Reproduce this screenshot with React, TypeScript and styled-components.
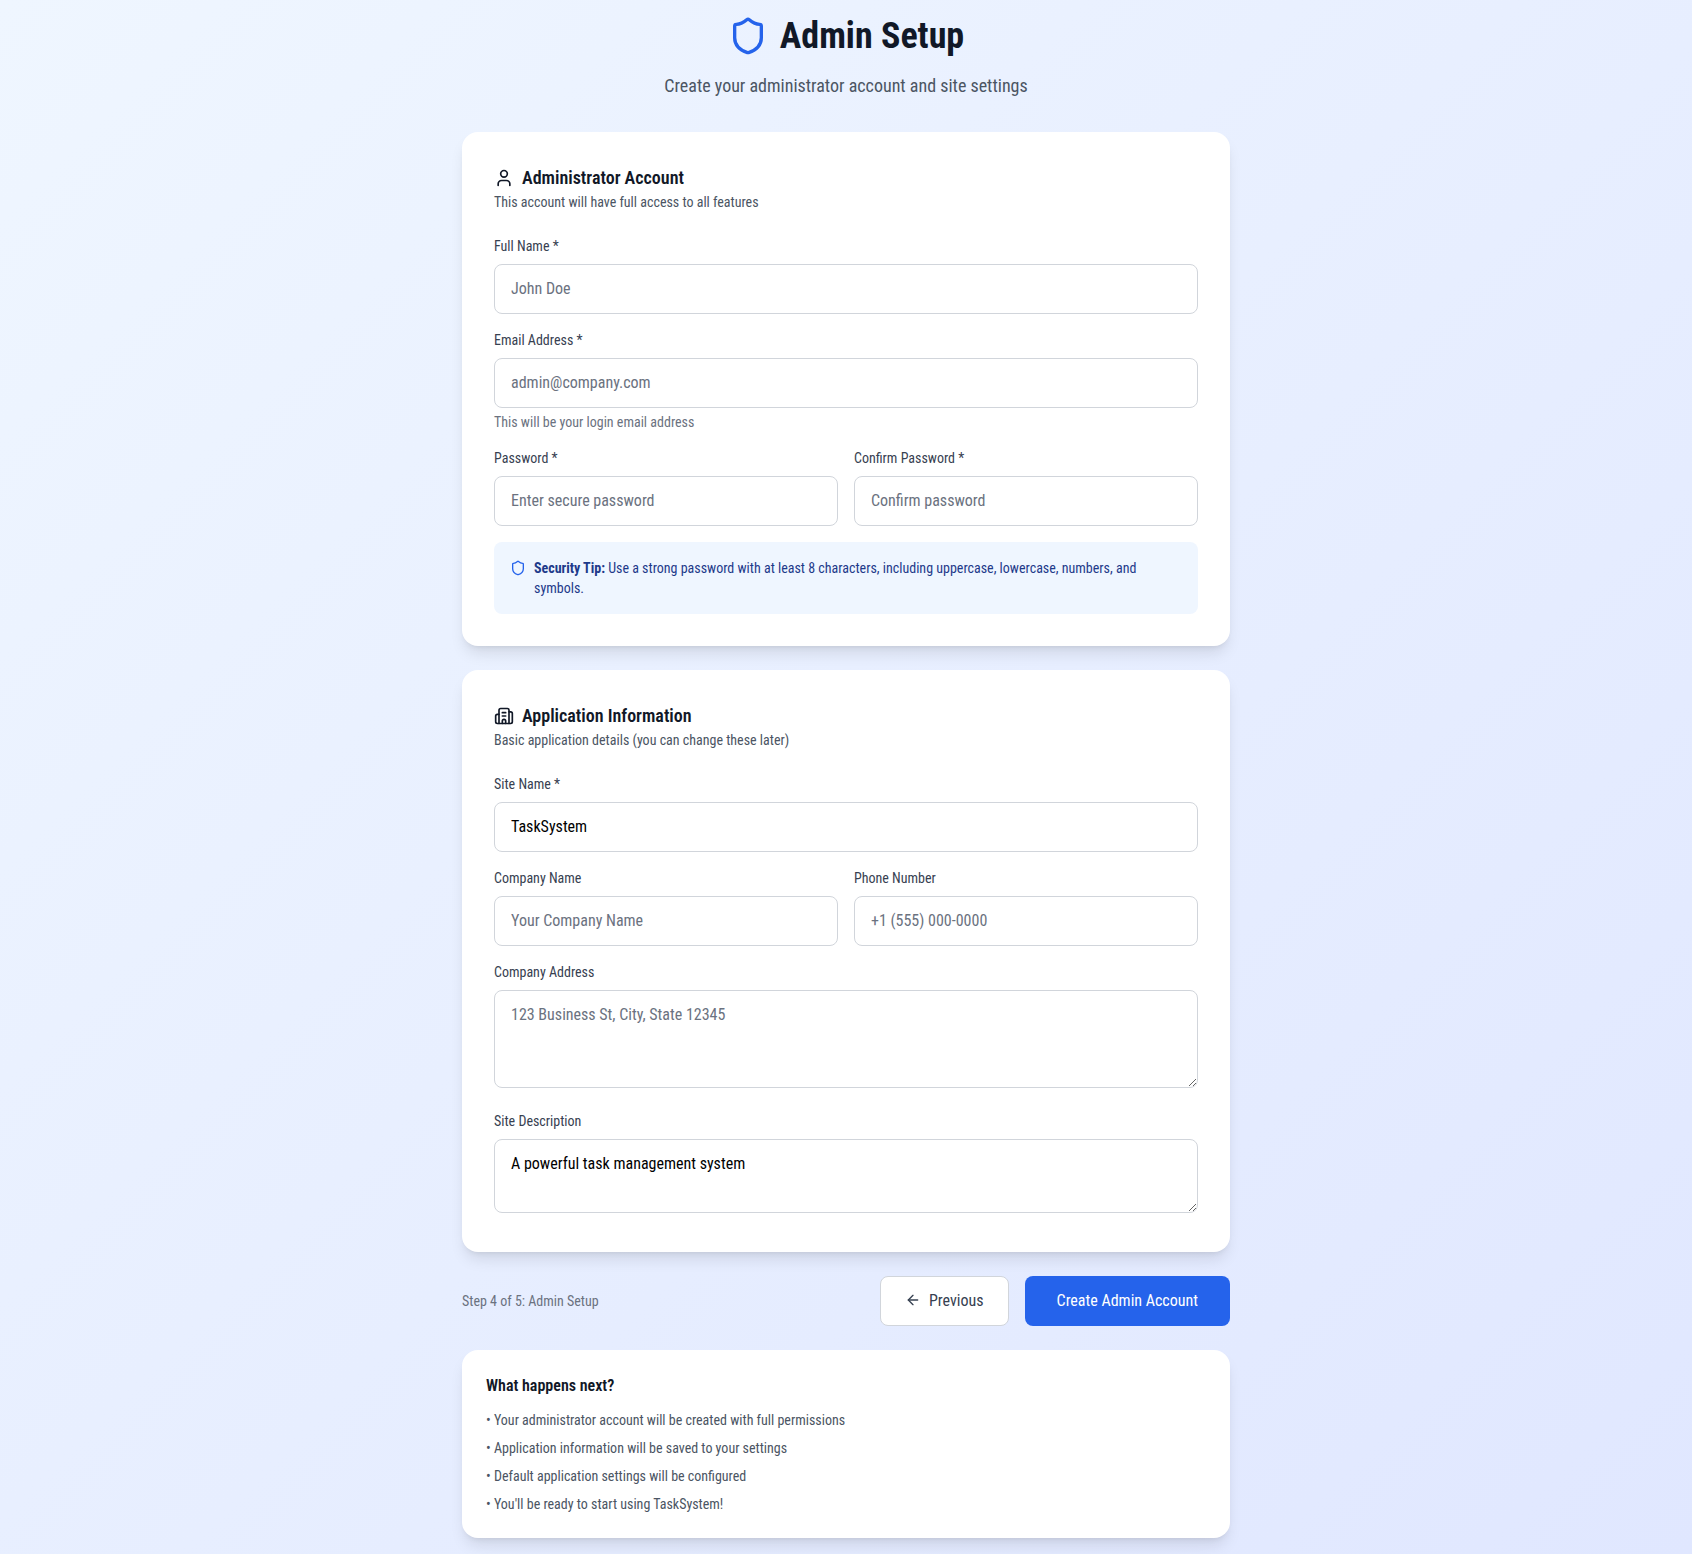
import React from "react";
import styled, { createGlobalStyle } from "styled-components";

const Global = createGlobalStyle`
  * { box-sizing: border-box; }
  html, body { margin: 0; padding: 0; }
  body { font-family: Roboto, "Liberation Sans", sans-serif; font-stretch: 75%; font-size: 16px; line-height: 1.5; color: #111827; }
  input, textarea, button { font-stretch: 75%; }
`;

const Page = styled.div`
  min-height: 1554px;
  padding: 16px 0;
  background: linear-gradient(135deg, #eff6ff 0%, #e0e7ff 100%);
`;
const Column = styled.div`
  width: 768px;
  margin: 0 auto;
  display: flex;
  flex-direction: column;
`;
const Header = styled.header`
  text-align: center;
  margin-bottom: 32px;
`;
const TitleRow = styled.div`
  display: flex;
  align-items: center;
  justify-content: center;
  gap: 12px;
  margin-bottom: 16px;
`;
const Title = styled.h1`
  margin: 0;
  font-size: 36px;
  line-height: 40px;
  font-weight: 700;
  color: #111827;
`;
const Subtitle = styled.p`
  margin: 0;
  font-size: 18px;
  line-height: 28px;
  color: #4b5563;
`;
const Card = styled.section<{ $pad?: number; $gap?: number }>`
  background: #fff;
  border-radius: 16px;
  padding: ${(p) => p.$pad ?? 32}px;
  margin-bottom: ${(p) => p.$gap ?? 24}px;
  box-shadow: 0 10px 15px -3px rgba(0, 0, 0, 0.1), 0 4px 6px -4px rgba(0, 0, 0, 0.1);
`;
const CardTitle = styled.h2`
  margin: 0;
  display: flex;
  align-items: center;
  gap: 8px;
  font-size: 18px;
  line-height: 28px;
  font-weight: 600;
  color: #111827;
`;
const CardDesc = styled.p`
  margin: 0 0 24px;
  font-size: 14px;
  line-height: 20px;
  color: #4b5563;
`;
const Fields = styled.div`
  display: flex;
  flex-direction: column;
  gap: 16px;
`;
const Field = styled.div`
  display: block;
  min-width: 0;
`;
const Label = styled.label`
  display: block;
  font-size: 14px;
  line-height: 20px;
  font-weight: 400;
  color: #374151;
  margin-bottom: 8px;
`;
const Input = styled.input`
  display: block;
  width: 100%;
  height: 50px;
  padding: 0 16px 2px;
  border: 1px solid #d1d5db;
  border-radius: 8px;
  background: #fff;
  font: 400 16px Roboto, sans-serif;
  font-stretch: 75%;
  color: #000;
  &::placeholder { color: #6b7280; opacity: 1; }
`;
const TextArea = styled.textarea<{ $h: number }>`
  display: block;
  width: 100%;
  height: ${(p) => p.$h}px;
  margin-bottom: 7px;
  padding: 12px 16px;
  border: 1px solid #d1d5db;
  border-radius: 8px;
  background: #fff;
  font: 400 16px/24px Roboto, sans-serif;
  font-stretch: 75%;
  color: #000;
  &::placeholder { color: #6b7280; opacity: 1; }
`;
const Help = styled.p`
  margin: 4px 0 0;
  font-size: 14px;
  line-height: 20px;
  color: #6b7280;
`;
const Two = styled.div`
  display: grid;
  grid-template-columns: 1fr 1fr;
  gap: 16px;
`;
const Tip = styled.div`
  display: flex;
  gap: 8px;
  padding: 16px;
  border-radius: 8px;
  background: #eff6ff;
  font-size: 14px;
  line-height: 20px;
  color: #1e3a8a;
  svg { flex: none; margin-top: 2px; color: #2563eb; }
  strong { font-weight: 700; }
`;
const Actions = styled.div`
  display: flex;
  align-items: center;
  justify-content: space-between;
  margin-bottom: 24px;
`;
const Step = styled.span`
  font-size: 14px;
  line-height: 20px;
  color: #6b7280;
`;
const Buttons = styled.div`
  display: flex;
  gap: 16px;
`;
const Button = styled.button<{ $primary?: boolean }>`
  height: 50px;
  padding: 0 ${(p) => (p.$primary ? 32 : 24)}px 2px;
  display: inline-flex;
  align-items: center;
  gap: 8px;
  border-radius: 8px;
  border: ${(p) => (p.$primary ? "0" : "1px solid #d1d5db")};
  background: ${(p) => (p.$primary ? "#2563eb" : "#fff")};
  color: ${(p) => (p.$primary ? "#fff" : "#374151")};
  font: 400 16px Roboto, sans-serif;
  font-stretch: 75%;
`;
const NextTitle = styled.h3`
  margin: 0 0 12px;
  font-size: 16px;
  line-height: 24px;
  font-weight: 600;
  color: #111827;
`;
const NextList = styled.ul`
  margin: 0;
  padding: 0;
  list-style: none;
  display: flex;
  flex-direction: column;
  gap: 8px;
  font-size: 14px;
  line-height: 20px;
  color: #4b5563;
`;

const Shield = ({ size, sw }: { size: number; sw: number }) => (
  <svg width={size} height={size} viewBox="0 0 24 24" fill="none" stroke="currentColor" strokeWidth={sw} strokeLinecap="round" strokeLinejoin="round">
    <path d="M20 13c0 5-3.5 7.5-7.66 8.95a1 1 0 0 1-.67-.01C7.5 20.5 4 18 4 13V6a1 1 0 0 1 1-1c2 0 4.5-1.2 6.24-2.72a1.17 1.17 0 0 1 1.52 0C14.51 3.81 17 5 19 5a1 1 0 0 1 1 1z" />
  </svg>
);
const HeadIcon = ({ children }: { children: React.ReactNode }) => (
  <svg width={20} height={20} viewBox="0 0 24 24" fill="none" stroke="currentColor" strokeWidth={2} strokeLinecap="round" strokeLinejoin="round">
    {children}
  </svg>
);
const ShieldWrap = styled.span`
  display: inline-flex;
  color: #2563eb;
`;

export default function App() {
  return (
    <Page>
      <Global />
      <Column>
        <Header>
          <TitleRow>
            <ShieldWrap><Shield size={40} sw={2} /></ShieldWrap>
            <Title>Admin Setup</Title>
          </TitleRow>
          <Subtitle>Create your administrator account and site settings</Subtitle>
        </Header>

        <Card>
          <CardTitle>
            <HeadIcon>
              <path d="M19 21v-2a4 4 0 0 0-4-4H9a4 4 0 0 0-4 4v2" />
              <circle cx="12" cy="7" r="4" />
            </HeadIcon>
            Administrator Account
          </CardTitle>
          <CardDesc>This account will have full access to all features</CardDesc>
          <Fields>
            <Field>
              <Label>Full Name *</Label>
              <Input placeholder="John Doe" />
            </Field>
            <Field>
              <Label>Email Address *</Label>
              <Input placeholder="admin@company.com" />
              <Help>This will be your login email address</Help>
            </Field>
            <Two>
              <Field>
                <Label>Password *</Label>
                <Input placeholder="Enter secure password" />
              </Field>
              <Field>
                <Label>Confirm Password *</Label>
                <Input placeholder="Confirm password" />
              </Field>
            </Two>
            <Tip>
              <Shield size={16} sw={2} />
              <span><strong>Security Tip:</strong> Use a strong password with at least 8 characters, including uppercase, lowercase, numbers, and symbols.</span>
            </Tip>
          </Fields>
        </Card>

        <Card>
          <CardTitle>
            <HeadIcon>
              <path d="M10 12h4" />
              <path d="M10 8h4" />
              <path d="M14 21v-3a2 2 0 0 0-4 0v3" />
              <path d="M6 10H4a2 2 0 0 0-2 2v7a2 2 0 0 0 2 2h16a2 2 0 0 0 2-2V9a2 2 0 0 0-2-2h-2" />
              <path d="M6 21V5a2 2 0 0 1 2-2h8a2 2 0 0 1 2 2v16" />
            </HeadIcon>
            Application Information
          </CardTitle>
          <CardDesc>Basic application details (you can change these later)</CardDesc>
          <Fields>
            <Field>
              <Label>Site Name *</Label>
              <Input defaultValue="TaskSystem" />
            </Field>
            <Two>
              <Field>
                <Label>Company Name</Label>
                <Input placeholder="Your Company Name" />
              </Field>
              <Field>
                <Label>Phone Number</Label>
                <Input placeholder="+1 (555) 000-0000" />
              </Field>
            </Two>
            <Field>
              <Label>Company Address</Label>
              <TextArea $h={98} placeholder="123 Business St, City, State 12345" />
            </Field>
            <Field>
              <Label>Site Description</Label>
              <TextArea $h={74} defaultValue="A powerful task management system" />
            </Field>
          </Fields>
        </Card>

        <Actions>
          <Step>Step 4 of 5: Admin Setup</Step>
          <Buttons>
            <Button>
              <svg width={16} height={16} viewBox="0 0 24 24" fill="none" stroke="currentColor" strokeWidth={2} strokeLinecap="round" strokeLinejoin="round">
                <path d="m12 19-7-7 7-7" />
                <path d="M19 12H5" />
              </svg>
              Previous
            </Button>
            <Button $primary>Create Admin Account</Button>
          </Buttons>
        </Actions>

        <Card $pad={24} $gap={0}>
          <NextTitle>What happens next?</NextTitle>
          <NextList>
            <li>• Your administrator account will be created with full permissions</li>
            <li>• Application information will be saved to your settings</li>
            <li>• Default application settings will be configured</li>
            <li>• You'll be ready to start using TaskSystem!</li>
          </NextList>
        </Card>
      </Column>
    </Page>
  );
}
